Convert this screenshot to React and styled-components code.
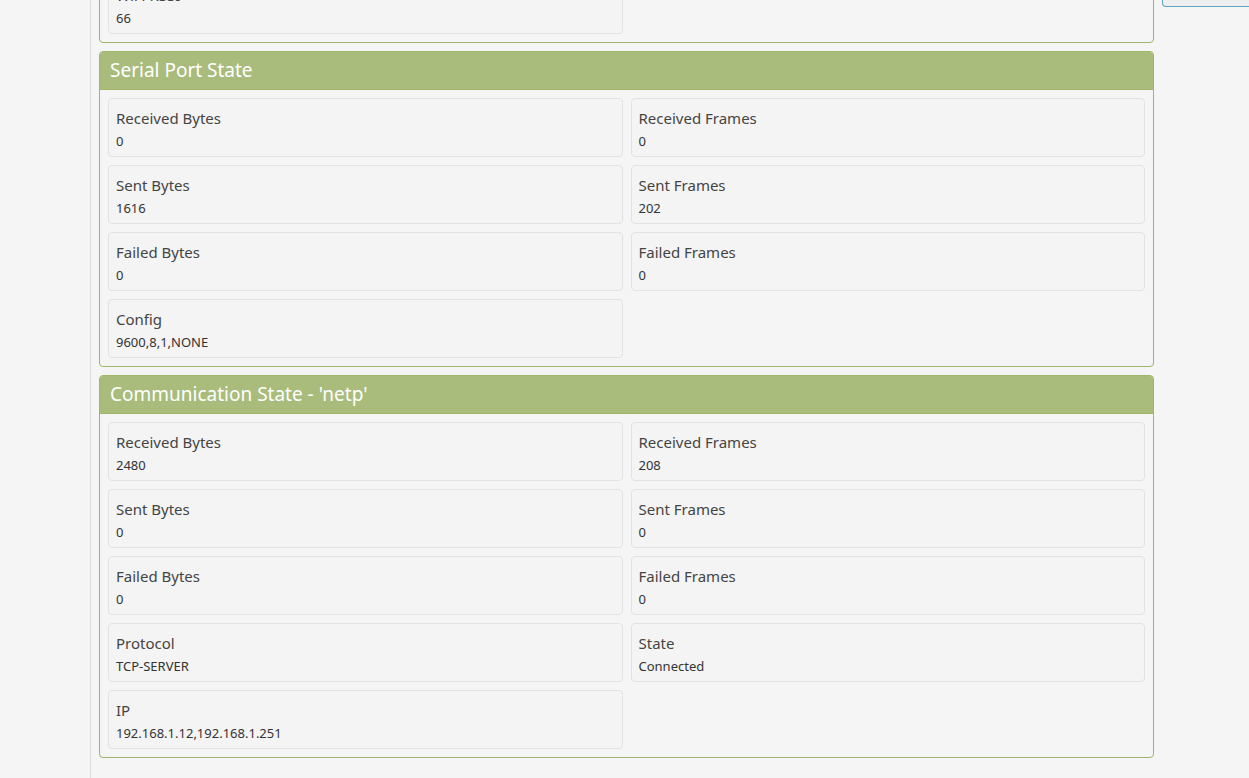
import React from "react";
import styled, { createGlobalStyle } from "styled-components";

const Global = createGlobalStyle`
  html, body { margin: 0; padding: 0; background: #f4f5f4; }
  body { font-family: "Noto Sans", "Open Sans", sans-serif; color: #333; overflow: hidden; }
`;

const Page = styled.div`
  display: grid;
  grid-template-columns: 91px 1fr;
  height: 778px;
  overflow: hidden;
`;

const Sidebar = styled.div`
  border-right: 1px solid #dcdcdc;
  background: #f4f5f4;
`;

const Main = styled.div`
  display: grid;
  grid-template-columns: 1055px 1fr;
  column-gap: 8px;
  padding-left: 8px;
  align-items: start;
`;

const Column = styled.div`
  display: flex;
  flex-direction: column;
  gap: 8px;
  margin-top: -34px;
`;

const Side = styled.div`
  height: 7px;
  background: #eeeeee;
  border: 1px solid #5fa3c9;
  border-top: none;
  border-right: none;
  border-bottom-left-radius: 4px;
  margin-top: -1px;
`;

const Panel = styled.section`
  border: 1px solid #9fb567;
  border-radius: 4px;
  background: #f4f5f4;
  overflow: hidden;
`;

const Header = styled.div`
  height: 37px;
  background: #a9bc7c;
  border-bottom: 1px solid #9fb567;
  color: #fff;
  font-size: 19px;
  line-height: 36px;
  padding: 0 10px;
`;

const Body = styled.div`
  display: grid;
  grid-template-columns: 1fr 1fr;
  gap: 8px;
  padding: 8px;
`;

const Card = styled.div`
  height: 59px;
  box-sizing: border-box;
  background: #f4f4f4;
  border: 1px solid #e2e2e2;
  border-radius: 4px;
  padding: 9px 7px 0;
`;

const Label = styled.div`
  font-size: 15px;
  line-height: 20px;
  color: #444;
`;

const Value = styled.div`
  font-size: 13px;
  line-height: 18px;
  margin-top: 4px;
  color: #333;
`;

const Item = ({ label, value }) => (
  <Card>
    <Label>{label}</Label>
    <Value>{value}</Value>
  </Card>
);

const serial = [
  ["Received Bytes", "0"],
  ["Received Frames", "0"],
  ["Sent Bytes", "1616"],
  ["Sent Frames", "202"],
  ["Failed Bytes", "0"],
  ["Failed Frames", "0"],
  ["Config", "9600,8,1,NONE"],
];

const comm = [
  ["Received Bytes", "2480"],
  ["Received Frames", "208"],
  ["Sent Bytes", "0"],
  ["Sent Frames", "0"],
  ["Failed Bytes", "0"],
  ["Failed Frames", "0"],
  ["Protocol", "TCP-SERVER"],
  ["State", "Connected"],
  ["IP", "192.168.1.12,192.168.1.251"],
];

export default function App() {
  return (
    <>
      <Global />
      <Page>
        <Sidebar />
        <Main>
          <Column>
            <Panel>
              <Body>
                <Item label="WiFi RSSI" value="66" />
              </Body>
            </Panel>
            <Panel>
              <Header>Serial Port State</Header>
              <Body>
                {serial.map(([l, v]) => (
                  <Item key={l} label={l} value={v} />
                ))}
              </Body>
            </Panel>
            <Panel>
              <Header>Communication State - 'netp'</Header>
              <Body>
                {comm.map(([l, v]) => (
                  <Item key={l} label={l} value={v} />
                ))}
              </Body>
            </Panel>
          </Column>
          <Side />
        </Main>
      </Page>
    </>
  );
}
